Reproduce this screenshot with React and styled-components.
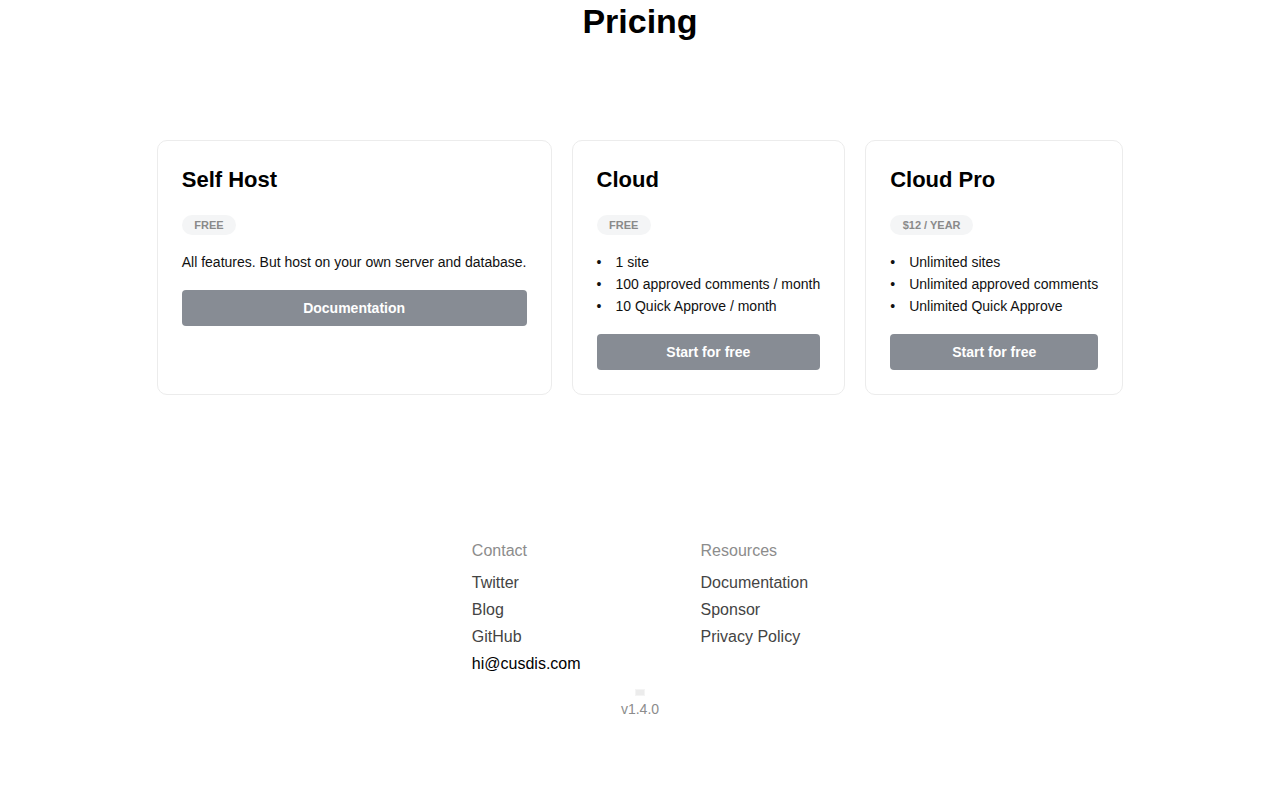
import styled, { createGlobalStyle } from "styled-components";

const GlobalStyle = createGlobalStyle`
  body {
    margin: 0;
    background: #fff;
    font-family: "Liberation Sans", Arial, sans-serif;
    color: #000;
  }
`;

const Page = styled.div`
  display: flex;
  flex-direction: column;
  align-items: center;
`;

const Heading = styled.h1`
  margin: 2px 0 0;
  font-size: 34px;
  line-height: 39px;
  font-weight: 700;
`;

const Plans = styled.div`
  display: flex;
  justify-content: center;
  align-items: stretch;
  gap: 20px;
  margin-top: 99px;
`;

const Card = styled.div`
  border: 1px solid #ececec;
  border-radius: 10px;
  padding: 24px;
  display: flex;
  flex-direction: column;
  align-items: stretch;
`;

const PlanName = styled.h2`
  margin: 0 0 20px;
  font-size: 22px;
  line-height: 30px;
  font-weight: 700;
`;

const Badge = styled.span`
  align-self: flex-start;
  height: 20px;
  line-height: 20px;
  padding: 0 12.5px;
  border-radius: 10px;
  background: #f4f5f6;
  color: #8a8a8a;
  font-size: 11px;
  font-weight: 700;
  text-transform: uppercase;
`;

const Text = styled.p`
  margin: 16px 0 0;
  font-size: 14px;
  line-height: 22px;
  color: #111;
  white-space: nowrap;
`;

const Features = styled.ul`
  margin: 16px 0 0;
  padding: 0;
  list-style: none;
  font-size: 14px;
  line-height: 22px;
  color: #111;
  white-space: nowrap;

  li::before {
    content: "•";
    display: inline-block;
    width: 19px;
  }
`;

const Button = styled.a`
  display: block;
  margin-top: 17px;
  height: 36px;
  line-height: 36px;
  border-radius: 4px;
  background: #878c94;
  color: #fff;
  font-size: 14px;
  font-weight: 700;
  text-align: center;
  text-decoration: none;
  cursor: pointer;
`;

const Footer = styled.footer`
  margin-top: 144px;
  display: flex;
  gap: 120px;
`;

const Column = styled.div`
  display: flex;
  flex-direction: column;
`;

const ColumnTitle = styled.div`
  font-size: 16px;
  line-height: 24px;
  color: #8c8c8c;
  margin-bottom: 6px;
`;

const FooterLink = styled.a`
  font-size: 16px;
  line-height: 27px;
  color: ${(p) => (p.$strong ? "#000" : "#444")};
  text-decoration: none;
`;

const Version = styled.div`
  margin-top: 12px;
  display: flex;
  flex-direction: column;
  align-items: center;
  font-size: 14px;
  line-height: 20px;
  color: #8c8c8c;
`;

const BrokenImage = styled.span`
  display: block;
  width: 8px;
  height: 5px;
  background: #ececec;
  border: 1px solid #f4f4f4;
  margin-bottom: 3px;
`;

const plans = [
  {
    name: "Self Host",
    price: "Free",
    text: "All features. But host on your own server and database.",
    action: "Documentation",
  },
  {
    name: "Cloud",
    price: "Free",
    features: ["1 site", "100 approved comments / month", "10 Quick Approve / month"],
    action: "Start for free",
  },
  {
    name: "Cloud Pro",
    price: "$12 / year",
    features: ["Unlimited sites", "Unlimited approved comments", "Unlimited Quick Approve"],
    action: "Start for free",
  },
];

function App() {
  return (
    <Page>
      <GlobalStyle />
      <Heading>Pricing</Heading>
      <Plans>
        {plans.map((plan) => (
          <Card key={plan.name}>
            <PlanName>{plan.name}</PlanName>
            <Badge>{plan.price}</Badge>
            {plan.text && <Text>{plan.text}</Text>}
            {plan.features && (
              <Features>
                {plan.features.map((f) => (
                  <li key={f}>{f}</li>
                ))}
              </Features>
            )}
            <Button>{plan.action}</Button>
          </Card>
        ))}
      </Plans>
      <Footer>
        <Column>
          <ColumnTitle>Contact</ColumnTitle>
          <FooterLink href="#">Twitter</FooterLink>
          <FooterLink href="#">Blog</FooterLink>
          <FooterLink href="#">GitHub</FooterLink>
          <FooterLink href="#" $strong>hi@cusdis.com</FooterLink>
        </Column>
        <Column>
          <ColumnTitle>Resources</ColumnTitle>
          <FooterLink href="#">Documentation</FooterLink>
          <FooterLink href="#">Sponsor</FooterLink>
          <FooterLink href="#">Privacy Policy</FooterLink>
        </Column>
      </Footer>
      <Version>
        <BrokenImage />
        v1.4.0
      </Version>
    </Page>
  );
}

export default App;
